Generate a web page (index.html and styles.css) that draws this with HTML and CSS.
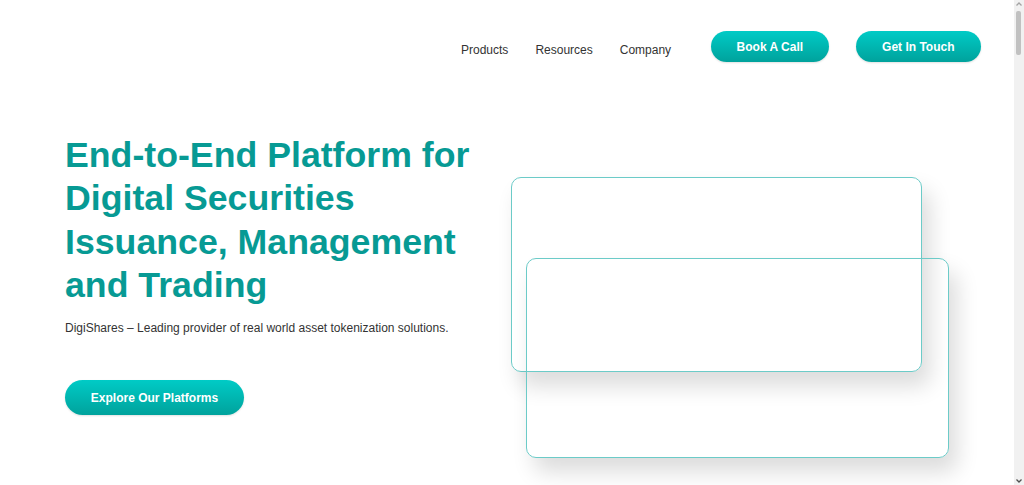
FILE: index.html
```html
<!DOCTYPE html>
<html lang="en">
<head>
<meta charset="utf-8">
<title>DigiShares</title>
<link rel="stylesheet" href="styles.css">
</head>
<body>
<header class="site-header">
  <nav class="main-nav">
    <a class="nav-link" href="#">Products</a>
    <a class="nav-link" href="#">Resources</a>
    <a class="nav-link" href="#">Company</a>
  </nav>
  <div class="header-actions">
    <a class="btn btn-nav" href="#">Book A Call</a>
    <a class="btn btn-nav btn-contact" href="#">Get In Touch</a>
  </div>
</header>
<main>
  <section class="hero">
    <div class="hero-text">
      <h1 class="hero-title">End-to-End Platform for Digital Securities Issuance, Management and Trading</h1>
      <p class="hero-sub">DigiShares – Leading provider of real world asset tokenization solutions.</p>
      <a class="btn btn-hero" href="#">Explore Our Platforms</a>
    </div>
    <div class="hero-visual">
      <div class="card card-back"></div>
      <div class="card card-front"></div>
    </div>
  </section>
  <section class="rest"></section>
</main>
<div class="fake-scrollbar" aria-hidden="true">
  <svg class="sb-arrow sb-up" width="10" height="8" viewBox="0 0 10 8"><path d="M2.5 5.5 L5 3 L7.5 5.5" fill="none" stroke="#a3a3a3" stroke-width="1.3"/></svg>
  <div class="sb-thumb"></div>
  <svg class="sb-arrow sb-down" width="10" height="8" viewBox="0 0 10 8"><path d="M2.5 2.5 L5 5 L7.5 2.5" fill="none" stroke="#505050" stroke-width="1.3"/></svg>
</div>
</body>
</html>
```

FILE: styles.css
```css
html, body {
  margin: 0;
  padding: 0;
  background: #ffffff;
}
body {
  font-family: "Liberation Sans", Arial, sans-serif;
  color: #333333;
}
.site-header {
  display: flex;
  justify-content: flex-end;
  align-items: flex-start;
  padding: 31px 43px 0 65px;
  height: 63px;
}
.main-nav {
  display: flex;
  gap: 27px;
  padding-top: 12px;
  margin-right: 40px;
}
.nav-link {
  font-size: 12px;
  line-height: 14px;
  color: #333333;
  text-decoration: none;
}
.header-actions {
  display: flex;
  gap: 27px;
}
.btn {
  display: inline-flex;
  align-items: center;
  justify-content: center;
  box-sizing: border-box;
  font-weight: bold;
  font-size: 12px;
  color: #ffffff;
  text-decoration: none;
  border-radius: 999px;
  background: linear-gradient(180deg, #00cbc6 0%, #00a29c 100%);
  box-shadow: 0 1px 2px rgba(0, 0, 0, 0.12);
}
.btn-nav {
  height: 31px;
  padding: 0 25.5px;
}
.btn-contact {
  padding: 0 26.5px;
}
.hero {
  display: flex;
  align-items: flex-start;
  padding-left: 65px;
}
.hero-text {
  width: 420px;
  padding-top: 40px;
}
.hero-title {
  margin: 0;
  font-size: 35.7px;
  line-height: 43.3px;
  font-weight: bold;
  color: #079a94;
}
.hero-sub {
  margin: 13px 0 0;
  font-size: 12px;
  line-height: 16px;
  color: #333333;
}
.btn-hero {
  margin-top: 44px;
  height: 35px;
  padding: 0 25.8px;
}
.hero-visual {
  position: relative;
  margin-left: 26px;
  margin-top: 83px;
  width: 438px;
  height: 281px;
}
.card {
  position: absolute;
  box-sizing: border-box;
  border: 1px solid #6ccbc8;
  border-radius: 10px;
  background: transparent;
  box-shadow: 8px 14px 22px rgba(0, 0, 0, 0.14);
}
.card-back {
  left: 0;
  top: 0;
  width: 411px;
  height: 195px;
}
.card-front {
  left: 15px;
  top: 81px;
  width: 423px;
  height: 200px;
}
.rest {
  height: 4500px;
}
.fake-scrollbar {
  position: fixed;
  top: 0;
  right: 0;
  width: 10px;
  height: 100vh;
  background: #f1f1f1;
}
.sb-arrow {
  position: absolute;
  left: 0;
}
.sb-up {
  top: 0;
}
.sb-down {
  bottom: 0;
}
.sb-thumb {
  position: absolute;
  top: 11px;
  left: 2px;
  width: 5px;
  height: 44px;
  border-radius: 2px;
  background: #c1c1c1;
}
```
